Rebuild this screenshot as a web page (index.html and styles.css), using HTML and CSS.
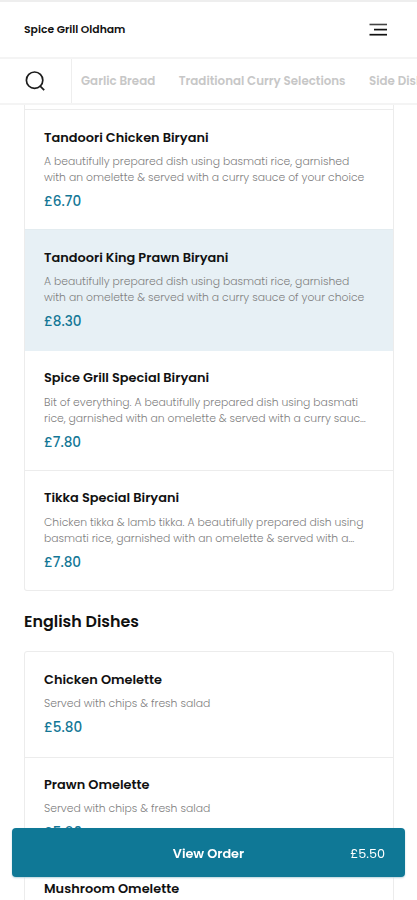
FILE: index.html
```html
<!DOCTYPE html>
<html lang="en">
<head>
<meta charset="utf-8">
<title>Spice Grill Oldham</title>
<link rel="stylesheet" href="styles.css">
</head>
<body>
<div class="screen">
  <header class="header">
    <h1 class="brand">Spice Grill Oldham</h1>
    <svg class="menu" width="18" height="14" viewBox="0 0 18 14" fill="none" stroke="#111">
      <path d="M0.5 1.5H18" stroke-width="1.6" stroke="#444"/><path d="M5 6.6H18" stroke-width="1.7"/><path d="M0.5 11.7H18" stroke-width="1.7"/>
    </svg>
  </header>
  <nav class="nav">
    <div class="search">
      <svg width="20" height="20" viewBox="0 0 20 20" fill="none" stroke="#1c1c1c" stroke-width="1.7">
        <circle cx="9.6" cy="9.2" r="8.2"/><path d="M14.6 14.6L19.2 19.2"/>
      </svg>
    </div>
    <div class="tabs"><span>Garlic Bread</span><span>Traditional Curry Selections</span><span>Side Dishes</span></div>
  </nav>
  <main class="content">
    <section class="card card-cut">
      <article class="item">
        <h3>Tandoori Chicken Biryani</h3>
        <p><span>A beautifully prepared dish using basmati rice, garnished</span><span>with an omelette &amp; served with a curry sauce of your choice</span></p>
        <b class="price">£6.70</b>
      </article>
      <article class="item selected">
        <h3>Tandoori King Prawn Biryani</h3>
        <p><span>A beautifully prepared dish using basmati rice, garnished</span><span>with an omelette &amp; served with a curry sauce of your choice</span></p>
        <b class="price">£8.30</b>
      </article>
      <article class="item">
        <h3>Spice Grill Special Biryani</h3>
        <p><span>Bit of everything. A beautifully prepared dish using basmati</span><span>rice, garnished with an omelette &amp; served with a curry sauc…</span></p>
        <b class="price">£7.80</b>
      </article>
      <article class="item">
        <h3>Tikka Special Biryani</h3>
        <p><span>Chicken tikka &amp; lamb tikka. A beautifully prepared dish using</span><span>basmati rice, garnished with an omelette &amp; served with a…</span></p>
        <b class="price">£7.80</b>
      </article>
    </section>
    <h2 class="section-title">English Dishes</h2>
    <section class="card">
      <article class="item short">
        <h3>Chicken Omelette</h3>
        <p><span>Served with chips &amp; fresh salad</span></p>
        <b class="price">£5.80</b>
      </article>
      <article class="item short">
        <h3>Prawn Omelette</h3>
        <p><span>Served with chips &amp; fresh salad</span></p>
        <b class="price">£5.80</b>
      </article>
      <article class="item short">
        <h3>Mushroom Omelette</h3>
      </article>
    </section>
  </main>
  <button class="order"><span></span><strong>View Order</strong><span class="total">£5.50</span></button>
</div>
</body>
</html>
```
FILE: styles.css
```css
* { box-sizing: border-box; margin: 0; }
body { background: #fff; color: #111; font-family: Poppins, Inter, "Liberation Sans", sans-serif; }
.screen { height: 900px; overflow: hidden; border-top: 2px solid #eee; display: flex; flex-direction: column; }
.header { height: 57px; flex: none; padding: 0 30px 0 24px; border-bottom: 2px solid #f4f4f4; display: flex; justify-content: space-between; align-items: center; }
.brand { font-size: 10.8px; font-weight: 600; line-height: 16px; padding-top: 1px; }
.menu { display: block; margin-top: 1px; }
.nav { height: 46px; flex: none; border-bottom: 2px solid #f4f4f4; display: flex; }
.search { width: 72px; flex: none; border-right: 1px solid #eee; padding: 12px 0 0 25px; }
.search svg { display: block; }
.tabs { flex: 1; min-width: 0; overflow: hidden; display: flex; align-items: center; gap: 23.5px; padding-left: 9px; white-space: nowrap; font-size: 11.85px; font-weight: 600; color: #c7c7c7; }
.content { flex: 1; min-height: 0; overflow: hidden; padding: 0 23px 0 24px; }
.card { border: 1px solid #ececec; border-radius: 3px; }
.card-cut { border-top: 0; border-radius: 0 0 3px 3px; padding-top: 4px; }
.item { height: 120.3px; border-top: 1px solid #ececec; padding: 17.6px 19px 0; }
.card .short { height: 104.5px; }
.card .short:first-child { border-top: 0; height: 104.8px; padding-top: 18.4px; }
.selected { background: #e7f0f5; border-color: #e3ecf0; }
.selected + .item { border-top-color: #e7f0f5; }
.item h3 { font-size: 12.92px; line-height: 19px; font-weight: 600; white-space: nowrap; }
.short h3 { margin-top: -.4px; }
.item p { margin-top: 7.5px; font-size: 10.81px; font-weight: 300; line-height: 16px; color: #808080; white-space: nowrap; }
.item p span { display: block; }
.price { display: block; margin-top: 6px; font-size: 13.6px; line-height: 20px; font-weight: 500; color: #137796; }
.section-title { font-size: 15.9px; line-height: 24px; font-weight: 600; margin: 18.5px 0 17.1px; }
.order { position: fixed; left: 12px; right: 12px; top: 828px; height: 49px; border: 0; border-radius: 4px; background: #0f7896; box-shadow: 0 1px 2px #b9d4de; color: #fff; font: 400 12.8px Poppins, Inter, sans-serif; padding: 2px 20px 0; display: grid; grid-template-columns: 1fr auto 1fr; align-items: center; }
.order strong { font-weight: 600; }
.total { text-align: right; }
```
